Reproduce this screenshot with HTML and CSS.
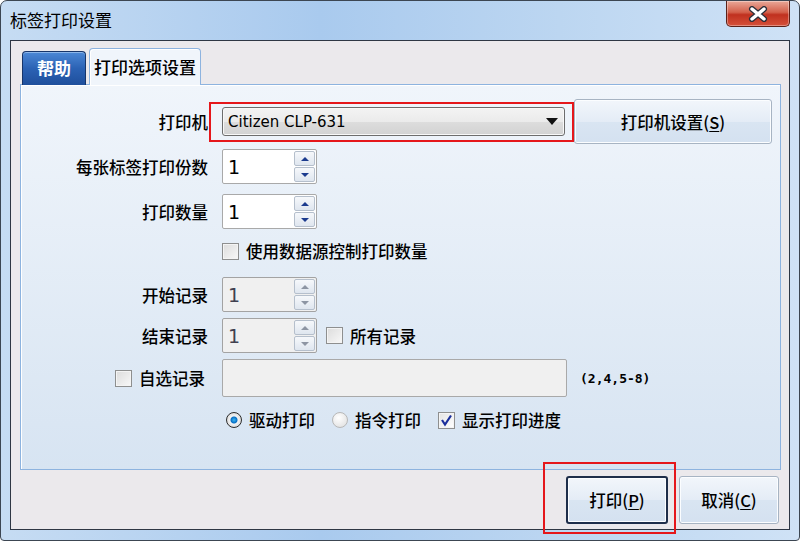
FILE: index.html
```html
<html>

<head>
    <title>标签打印设置</title>
    <link rel="stylesheet" href="styles.css">
</head>

<body>
    <div class="window">
        <div class="titlebar">
            <span class="title">标签打印设置</span>
            <div class="close">
                <svg width="20" height="16" viewBox="0 0 20 16">
                    <path d="M4 3 L16 13 M16 3 L4 13" stroke="#2b2f3a" stroke-width="6" stroke-linecap="round" />
                    <path d="M4 3 L16 13 M16 3 L4 13" stroke="#ffffff" stroke-width="3.4" stroke-linecap="round" />
                </svg>
            </div>
        </div>

        <div class="client">
            <div class="tabs">
                <div class="tab tab-help">帮助</div>
                <div class="tab tab-active">打印选项设置</div>
            </div>

            <div class="panel">
                <div class="row row-printer">
                    <div class="label">打印机</div>
                    <div class="combo">
                        <span>Citizen CLP-631</span>
                        <span class="arrow"></span>
                    </div>
                    <button class="btn btn-setup">打印机设置(<u>S</u>)</button>
                </div>

                <div class="row row-copies">
                    <div class="label">每张标签打印份数</div>
                    <div class="spin">
                        <span class="value">1</span>
                        <div class="spin-btns">
                            <span class="sb"><i class="up"></i></span>
                            <span class="sb"><i class="down"></i></span>
                        </div>
                    </div>
                </div>

                <div class="row row-qty">
                    <div class="label">打印数量</div>
                    <div class="spin">
                        <span class="value">1</span>
                        <div class="spin-btns">
                            <span class="sb"><i class="up"></i></span>
                            <span class="sb"><i class="down"></i></span>
                        </div>
                    </div>
                </div>

                <div class="row row-source">
                    <div class="label"></div>
                    <span class="check"></span>
                    <span class="opt">使用数据源控制打印数量</span>
                </div>

                <div class="row row-start">
                    <div class="label">开始记录</div>
                    <div class="spin disabled">
                        <span class="value">1</span>
                        <div class="spin-btns">
                            <span class="sb"><i class="up"></i></span>
                            <span class="sb"><i class="down"></i></span>
                        </div>
                    </div>
                </div>

                <div class="row row-end">
                    <div class="label">结束记录</div>
                    <div class="spin disabled">
                        <span class="value">1</span>
                        <div class="spin-btns">
                            <span class="sb"><i class="up"></i></span>
                            <span class="sb"><i class="down"></i></span>
                        </div>
                    </div>
                    <span class="check check-all"></span>
                    <span class="opt">所有记录</span>
                </div>

                <div class="row row-pick">
                    <div class="label"><span class="check"></span><span class="opt">自选记录</span></div>
                    <div class="field"></div>
                    <span class="hint">(2,4,5-8)</span>
                </div>

                <div class="row row-mode">
                    <div class="label"></div>
                    <span class="radio on"></span>
                    <span class="opt">驱动打印</span>
                    <span class="radio"></span>
                    <span class="opt">指令打印</span>
                    <span class="check checked">
                        <svg width="13" height="13" viewBox="0 0 13 13">
                            <path d="M2 6 L5 10.5 L11 1.5" fill="none" stroke="#1b2f9c" stroke-width="2.2" />
                        </svg>
                    </span>
                    <span class="opt">显示打印进度</span>
                </div>
            </div>

            <div class="actions">
                <button class="btn btn-default">打印(<u>P</u>)</button>
                <button class="btn btn-cancel">取消(<u>C</u>)</button>
            </div>

            <!-- red annotation boxes -->
            <div class="mark mark-printer"></div>
            <div class="mark mark-print"></div>
        </div>
    </div>
</body>

</html>
```

FILE: styles.css
```css
* {
    box-sizing: border-box;
}

body {
    margin: 0px;
    background-color: #ffffff;
    font-family: "Noto Sans CJK SC", "DejaVu Sans", sans-serif;
    font-size: 16.5px;
    font-weight: 500;
    color: #000000;
}

.window {
    width: 800px;
    height: 541px;
    display: flex;
    flex-direction: column;
    border: 1px solid #3c4652;
    border-radius: 7px 7px 4px 4px;
    background: linear-gradient(to right, #c6dcf3, #a9caee 40%, #bcd6f1 70%, #cfe2f6);
    overflow: hidden;
}

.titlebar {
    height: 39px;
    display: flex;
    align-items: flex-start;
    flex-shrink: 0;
}

.title {
    padding-left: 9px;
    padding-top: 8px;
    font-size: 17px;
    font-weight: 400;
    line-height: 22px;
    color: #000000;
}

.close {
    margin-left: auto;
    margin-right: 9px;
    width: 64px;
    height: 26px;
    border: 1px solid #5a2119;
    border-top: none;
    border-radius: 0px 0px 5px 5px;
    background: linear-gradient(to bottom, #e9a898, #d3604b 45%, #c0311f 55%, #d5513a);
    display: flex;
    align-items: center;
    justify-content: center;
    box-shadow: inset 0px 0px 0px 1px rgba(255, 255, 255, 0.35);
}

.client {
    position: relative;
    flex: 1;
    margin: 0px 9px 10px 9px;
    border: 1px solid #2e3744;
    background-color: #ebe9ec;
    padding: 7px 0px 0px 9px;
    display: flex;
    flex-direction: column;
}

.tabs {
    display: flex;
    align-items: flex-end;
    height: 37px;
    position: relative;
    z-index: 1;
    margin-bottom: -1px;
    margin-left: 2px;
}

.tab {
    border-radius: 4px 4px 0px 0px;
    font-size: 17px;
    text-align: center;
}

.tab-help {
    width: 64px;
    height: 34px;
    line-height: 32px;
    color: #ffffff;
    font-weight: bold;
    border: 1px solid #17356a;
    border-bottom: none;
    background: linear-gradient(to bottom, #4c88d6, #2b62b4 50%, #1f4f9c);
    box-shadow: inset 0px 1px 0px #8cb6ea;
}

.tab-active {
    width: 112px;
    height: 37px;
    line-height: 36px;
    margin-left: 3px;
    border: 1px solid #8db3df;
    border-bottom: none;
    background-color: #f0f5fb;
    box-shadow: inset 1px 1px 0px #ffffff;
}

.panel {
    height: 386px;
    margin-right: 8px;
    border: 1px solid #8db3df;
    box-shadow: inset 1px 1px 0px #ffffff;
    background: linear-gradient(to bottom, #f0f5fb, #d7e4f2);
    padding-top: 14px;
}

.row {
    display: flex;
    align-items: center;
}

.label {
    width: 187px;
    margin-right: 14px;
    flex-shrink: 0;
    text-align: right;
    display: flex;
    justify-content: flex-end;
    align-items: center;
}

.row-printer {
    height: 45px;
}

.row-copies {
    height: 35px;
    margin-top: 5px;
}

.row-qty {
    height: 35px;
    margin-top: 10px;
}

.row-source {
    height: 20px;
    margin-top: 12px;
}

.row-start {
    height: 35px;
    margin-top: 16px;
}

.row-end {
    height: 35px;
    margin-top: 6px;
}

.row-pick {
    height: 38px;
    margin-top: 6px;
}

.row-mode {
    height: 20px;
    margin-top: 13px;
}

.combo {
    width: 343px;
    height: 29px;
    border: 1px solid #6d6d6d;
    border-radius: 3px;
    background: linear-gradient(to bottom, #f3f3f3, #ebebeb 50%, #dddddd 51%, #d2d2d2);
    box-shadow: inset 0px 0px 0px 1px #f8f8f8;
    display: flex;
    align-items: center;
    padding-left: 5px;
    padding-right: 6px;
    font-family: "DejaVu Sans", sans-serif;
    font-size: 15px;
    font-weight: 400;
    color: #000000;
}

.combo .arrow {
    margin-left: auto;
    width: 0px;
    height: 0px;
    border-left: 6px solid transparent;
    border-right: 6px solid transparent;
    border-top: 7px solid #111111;
}

.btn {
    font-family: "Noto Sans CJK SC", sans-serif;
    font-size: 16.5px;
    font-weight: 500;
    color: #000000;
    border: 1px solid #a7b4c3;
    border-radius: 3px;
    background: linear-gradient(to bottom, #f2f6fb, #e4ecf6 50%, #d9e5f2 51%, #d4e1f0);
    box-shadow: inset 0px 0px 0px 1px #fbfdff;
    padding: 0px;
}

.btn u {
    text-underline-offset: 2px;
}

.btn-setup {
    width: 198px;
    height: 45px;
    margin-left: 9px;
}

.spin {
    width: 95px;
    height: 35px;
    border: 1px solid #a9a9a9;
    border-radius: 2px;
    background-color: #ffffff;
    display: flex;
    align-items: center;
    padding-left: 5px;
}

.spin .value {
    flex: 1;
    font-family: "DejaVu Sans", sans-serif;
    font-size: 19px;
    font-weight: 400;
    color: #000000;
}

.spin.disabled {
    background-color: #f0f0f0;
    border-color: #a3a3a3;
}

.spin.disabled .value {
    color: #404050;
}

.spin-btns {
    width: 22px;
    height: 33px;
    display: flex;
    flex-direction: column;
    gap: 1px;
    padding: 1px 1px 1px 0px;
}

.sb {
    flex: 1;
    border: 1px solid #b5bfcc;
    border-radius: 2px;
    background: linear-gradient(to bottom, #f6f8fb, #dfe6ef);
    display: flex;
    align-items: center;
    justify-content: center;
}

.sb i {
    width: 0px;
    height: 0px;
    border-left: 4px solid transparent;
    border-right: 4px solid transparent;
}

.sb i.up {
    border-bottom: 4px solid #1c3b8e;
}

.sb i.down {
    border-top: 4px solid #1c3b8e;
}

.disabled .sb i.up {
    border-bottom-color: #8d95a3;
}

.disabled .sb i.down {
    border-top-color: #8d95a3;
}

.check {
    width: 17px;
    height: 17px;
    flex-shrink: 0;
    border: 1px solid #8e8f8f;
    background: linear-gradient(135deg, #dcdcdc, #f8f8f8);
    box-shadow: inset 0px 0px 0px 1px #f4f4f4;
    display: flex;
    align-items: center;
    justify-content: center;
}

.opt {
    margin-left: 7px;
}

.check-all {
    margin-left: 9px;
}

.row-pick .label .opt {
    margin-right: 3px;
}

.field {
    width: 345px;
    height: 38px;
    border: 1px solid #a9a9a9;
    border-radius: 2px;
    background-color: #f0f0f0;
}

.hint {
    margin-left: 13px;
    font-family: "DejaVu Sans Mono", monospace;
    font-size: 13px;
    font-weight: bold;
}

.radio {
    width: 16px;
    height: 16px;
    flex-shrink: 0;
    border-radius: 50%;
    border: 1px solid #b8b8b8;
    background: radial-gradient(circle at 40% 35%, #ffffff, #dcdcdc);
    margin-left: 17px;
}

.radio.on {
    margin-left: 4px;
    border-color: #2c2c2c;
    background: radial-gradient(circle, #39b6f2 0px, #0a6fc4 3px, #f4f4f4 4px, #dedede 7px);
}

.row-mode .check {
    margin-left: 17px;
}

.check.checked {
    background: linear-gradient(135deg, #e4e4e4, #ffffff);
}

.actions {
    display: flex;
    justify-content: flex-end;
    gap: 11px;
    margin-top: 6px;
    padding-right: 10px;
}

.btn-default {
    width: 102px;
    height: 48px;
    border: 2px solid #1e2e4a;
    border-radius: 3px;
}

.btn-cancel {
    width: 100px;
    height: 48px;
}

.mark {
    position: absolute;
    border: 2px solid #e5171b;
}

.mark-printer {
    left: 198px;
    top: 61px;
    width: 365px;
    height: 40px;
}

.mark-print {
    left: 532px;
    top: 421px;
    width: 133px;
    height: 72px;
}
```
